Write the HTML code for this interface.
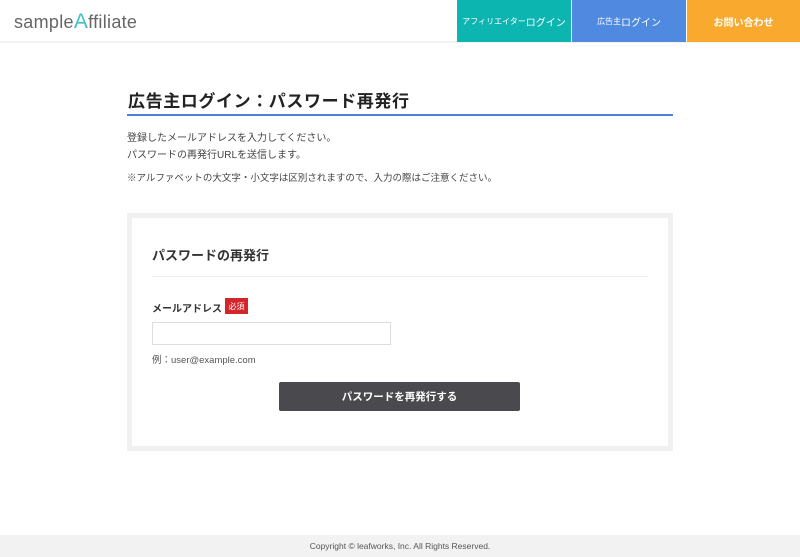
<!DOCTYPE html><html><head><meta charset="utf-8"><style>
*{margin:0;padding:0;box-sizing:border-box}
body{width:800px;height:557px;position:relative;background:#fff;font-family:"Liberation Sans","Noto Sans CJK JP",sans-serif;color:#333;overflow:hidden}
.a{position:absolute}
.hdr{left:0;top:0;width:800px;height:43px;border-bottom:2px solid #f2f2f2}
.logo{left:14px;top:10px;font-size:18px;color:#666;letter-spacing:0.3px}
.logo b{font-weight:normal;color:#3ec1c9;font-size:21px}
.nav{top:0;height:42px;color:#fff;display:flex;align-items:center;justify-content:center;font-size:10px}
</style></head><body>
<div class="a hdr"></div>
<div class="a logo">sample<b>A</b>ffiliate</div>
<div class="a nav" style="left:457px;width:114px;background:#0db5b0"><span style="font-size:8px">アフィリエイター</span>ログイン</div>
<div class="a nav" style="left:572px;width:114px;background:#4f8ae0"><span style="font-size:8px">広告主</span>ログイン</div>
<div class="a nav" style="left:687px;width:113px;background:#f9a92d;font-weight:bold">お問い合わせ</div>
<div class="a" style="left:128px;top:87px;font-size:17px;font-weight:bold;color:#222;letter-spacing:0.6px">広告主ログイン：パスワード再発行</div>
<div class="a" style="left:127px;top:114px;width:546px;height:2px;background:#4f7fd6"></div>
<div class="a" style="left:127px;top:130px;font-size:10px;line-height:17px;color:#444">登録したメールアドレスを入力してください。<br>パスワードの再発行URLを送信します。</div>
<div class="a" style="left:127px;top:170px;font-size:9.5px;color:#444">※アルファベットの大文字・小文字は区別されますので、入力の際はご注意ください。</div>
<div class="a" style="left:127px;top:213px;width:546px;height:238px;border:5px solid #f0f0f0"></div>
<div class="a" style="left:152px;top:245px;font-size:13px;font-weight:bold;color:#333">パスワードの再発行</div>
<div class="a" style="left:152px;top:276px;width:496px;height:1px;background:#eee"></div>
<div class="a" style="left:152px;top:300px;font-size:10px;font-weight:bold;color:#333">メールアドレス</div>
<div class="a" style="left:225px;top:298px;width:23px;height:16px;background:#d2262b;color:#fff;font-size:8px;display:flex;align-items:center;justify-content:center">必須</div>
<div class="a" style="left:152px;top:322px;width:239px;height:23px;border:1px solid #ddd"></div>
<div class="a" style="left:152px;top:352px;font-size:9.5px;color:#555">例：user@example.com</div>
<div class="a" style="left:279px;top:382px;width:241px;height:29px;background:#4a494d;border-radius:2px;color:#fff;font-size:10.5px;font-weight:bold;display:flex;align-items:center;justify-content:center">パスワードを再発行する</div>
<div class="a" style="left:0;top:535px;width:800px;height:22px;background:#f2f2f2;font-size:8.5px;color:#555;display:flex;align-items:center;justify-content:center">Copyright © leafworks, Inc. All Rights Reserved.</div>
</body></html>
